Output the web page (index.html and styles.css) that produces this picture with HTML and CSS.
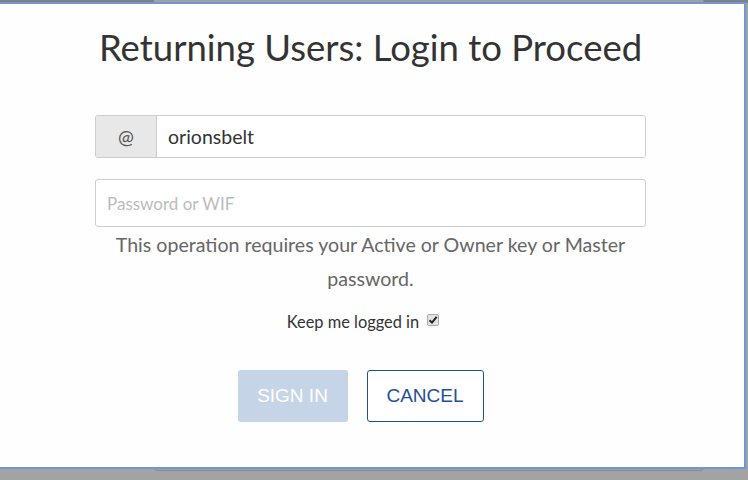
FILE: index.html
```html
<!DOCTYPE html>
<html lang="en">
<head>
    <meta charset="UTF-8">
    <meta name="viewport" content="width=device-width, initial-scale=1.0">
    <title>Login</title>
    <link rel="stylesheet" href="styles.css">
</head>
<body>
    <div class="page-behind"></div>

    <div class="modal">
        <h1 class="modal-title">Returning Users: Login to Proceed</h1>

        <form class="login-form">
            <div class="input-group">
                <span class="input-addon">@</span>
                <input class="input-field" type="text" value="orionsbelt">
            </div>

            <input class="input-field password" type="password" placeholder="Password or WIF">

            <p class="login-note">This operation requires your Active or Owner key or Master password.</p>

            <label class="remember">
                Keep me logged in
                <span class="fake-check">
                    <svg width="10" height="10" viewBox="0 0 10 10">
                        <path d="M1.5 5.2 L4 7.6 L8.6 1.8" fill="none" stroke="#222" stroke-width="2"/>
                    </svg>
                </span>
            </label>

            <div class="login-buttons">
                <button type="button" class="btn btn-primary" disabled>SIGN IN</button>
                <button type="button" class="btn btn-outline">CANCEL</button>
            </div>
        </form>
    </div>
</body>
</html>
```

FILE: styles.css
```css
* {
    margin: 0;
    padding: 0;
    box-sizing: border-box;
}

body {
    height: 480px;
    overflow: hidden;
    background: linear-gradient(#808080 0 3px, #a3a3a3 3px);
    font-family: Lato, 'Open Sans', sans-serif;
    color: #333;
}

/* stranka pod modalem */
.page-behind {
    width: 550px;
    height: 471px;
    margin-left: 154px;
    background: #a0a0a0;
    border-bottom: 1px solid #8c8c8c;
    border-right: 1px solid #8c8c8c;
    border-radius: 0 0 4px 4px;
}

.modal {
    position: absolute;
    top: 2px;
    left: -5px;
    width: 751px;
    height: 467px;
    background: #fefefe;
    border: 2px solid #6f96dc;
    padding: 20px 98px 0;
}

.modal-title {
    margin: 0 -40px;
    white-space: nowrap;
    font-size: 36.5px;
    font-weight: normal;
    line-height: 46px;
    text-align: center;
    color: #333;
}

.login-form {
    margin-top: 45px;
}

.input-group {
    display: flex;
    height: 43px;
    border: 1px solid #cccccc;
    border-radius: 3px;
    overflow: hidden;
}

.input-addon {
    width: 61px;
    display: flex;
    align-items: center;
    justify-content: center;
    background: #e8e8e8;
    border-right: 1px solid #cccccc;
    font-size: 19px;
    color: #555;
}

.input-field {
    flex: 1;
    border: none;
    outline: none;
    padding: 0 11px;
    font-family: inherit;
    font-size: 19.5px;
    color: #333;
    background: #fff;
}

.input-field.password {
    display: block;
    width: 100%;
    height: 48px;
    margin-top: 21px;
    border: 1px solid #cccccc;
    border-radius: 3px;
    font-size: 17px;
}

.input-field::placeholder {
    color: #bbbbbb;
}

.login-note {
    text-align: center;
    font-size: 19.6px;
    line-height: 34px;
    color: #666;
    padding: 0 10px;
    margin-top: 1px;
}

.remember {
    display: flex;
    justify-content: center;
    align-items: center;
    gap: 8px;
    margin-top: 16px;
    padding-right: 15px;
    font-size: 16.4px;
    line-height: 20px;
    color: #333;
}

.fake-check {
    width: 12px;
    height: 12px;
    display: flex;
    align-items: center;
    justify-content: center;
    border: 1px solid #aaa;
    border-radius: 2px;
    background: #e4e4e4;
    margin-top: -4px;
}

.login-buttons {
    display: flex;
    justify-content: center;
    gap: 19px;
    margin-top: 38px;
    padding-right: 20px;
}

.btn {
    height: 52px;
    border-radius: 3px;
    font-family: 'Liberation Sans', Arial, sans-serif;
    font-size: 19px;
    background: #fff;
}

.btn-primary {
    width: 110px;
    border: none;
    background: #c6d4e7;
    color: #fff;
}

.btn-outline {
    width: 117px;
    border: 1px solid #1f4f9a;
    color: #1f4f9a;
}
```
